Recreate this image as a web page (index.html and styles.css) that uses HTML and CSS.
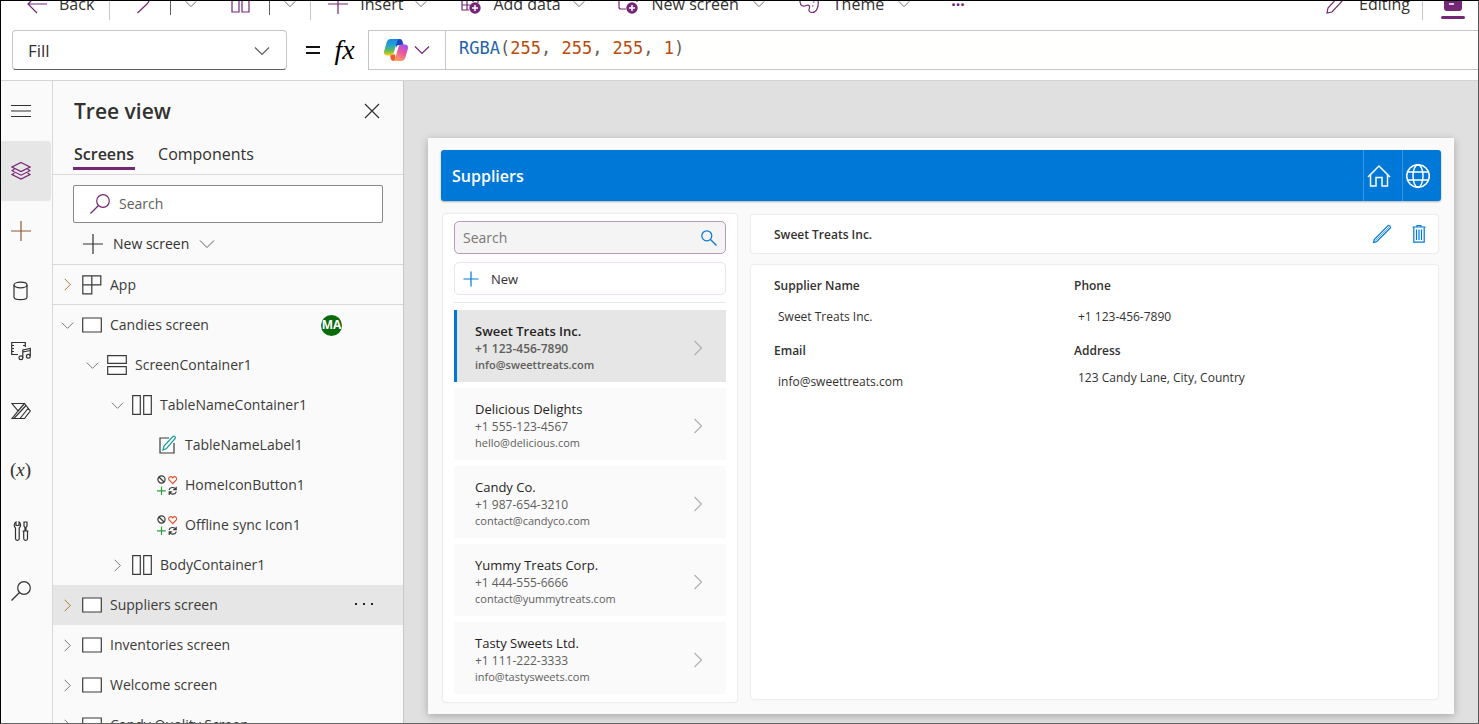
FILE: index.html
```html
<!DOCTYPE html>
<html lang="en">
<head>
<meta charset="utf-8">
<meta name="viewport" content="width=device-width, initial-scale=1">
<title>Suppliers screen - App editor</title>
<link rel="stylesheet" href="styles.css">
</head>
<body>
<svg class="sprite" aria-hidden="true">
  <symbol id="down" viewBox="0 0 16 16"><path d="M1 4.5l7 7 7-7"/></symbol>
  <symbol id="right" viewBox="0 0 16 16"><path d="M4.5 1l7 7-7 7"/></symbol>
  <symbol id="plus" viewBox="0 0 20 20"><path d="M10 0v20M0 10h20"/></symbol>
  <symbol id="search" viewBox="0 0 20 20"><circle cx="13" cy="7" r="6.3"/><path d="M8.5 11.5L.5 19.5"/></symbol>
  <symbol id="screen" viewBox="0 0 20 20"><path class="paper" d="M.7 3h18.6v14H.7z"/></symbol>
  <symbol id="rows" viewBox="0 0 20 20"><path class="paper" d="M.7.7h18.6v7.6H.7zM.7 11.7h18.6v7.6H.7z"/></symbol>
  <symbol id="cols" viewBox="0 0 20 20"><path class="paper" d="M.7.7h7.6v18.6H.7zM11.7.7h7.6v18.6h-7.6z"/></symbol>
  <symbol id="icons" viewBox="0 0 20 20">
    <circle cx="4.5" cy="4.5" r="3.600"/><path d="M2 2l5 5"/>
    <path class="heart" d="M15.700 8.600l-3.600-3.700c-1.500-2 1.400-4.600 3.600-2 2.200-2.600 5.100 0 3.600 2z"/>
    <path class="green" d="M4.500 11.500v8.500M0 15.800h8.800"/>
    <path d="M12.100 15c.8-3 5.200-3.400 6.700-.6M19.200 11.700v3h-3M19.300 16.600c-.8 3-5.200 3.400-6.700.6M12.200 19.900v-3h3"/>
  </symbol>
  <symbol id="badge" viewBox="0 0 12 12"><circle class="solid" cx="6" cy="6" r="5.700"/><path class="cross" d="M6 3v6M3 6h6"/></symbol>
</svg>

<header class="commands">
  <div class="commands-row">
    <button class="cmd back"><svg class="i20" viewBox="0 0 20 20"><path d="M20 10H1M10 1l-9 9 9 9"/></svg>Back</button>
    <span class="rule"></span>
    <button class="cmd undo" aria-label="Undo"><svg class="i20" viewBox="0 0 20 20"><path d="M3 0v5h5M3 5c4-6 14-5 13 1 0 2-1 3-2 4L4.500 19"/></svg></button>
    <span class="rule short"></span>
    <button class="cmd more" aria-label="Undo options"><svg class="chev"><use href="#down"/></svg></button>
    <button class="cmd paste" aria-label="Paste"><svg class="i20" viewBox="0 0 20 20"><path d="M1 2h7v16H1zM11 6h7v12h-7zM5 2h9v4"/></svg></button>
    <span class="rule short"></span>
    <button class="cmd more end" aria-label="Paste options"><svg class="chev"><use href="#down"/></svg></button>
    <span class="rule"></span>
    <button class="cmd insert"><svg class="i20"><use href="#plus"/></svg>Insert<svg class="chev"><use href="#down"/></svg></button>
    <button class="cmd data"><svg class="i20" viewBox="0 0 20 20"><path d="M1 1h16v8M1 1v15h7M1 6h16M1 11h8M6 1v15M12 1v7"/><use href="#badge" x="8" y="8" width="12" height="12"/></svg>Add data<svg class="chev"><use href="#down"/></svg></button>
    <button class="cmd screen"><svg class="i20" viewBox="0 0 20 20"><path d="M1 2h18v6M1 2v11c0 1.500.5 2 2 2h5"/><use href="#badge" x="8" y="8" width="12" height="12"/></svg>New screen<svg class="chev"><use href="#down"/></svg></button>
    <button class="cmd theme"><svg class="i20" viewBox="0 0 20 20"><path d="M1 7C1 3 5 .7 10 .7s9.300 3 9.300 8-2 9.800-6 9.800c-3 0-4-2-3-4 1-3-1-4-3-3-3 1.500-6 .5-6.300-3.700z"/><path d="M14 8h1.500M13 12h1.500M10 5h1.500"/></svg>Theme<svg class="chev"><use href="#down"/></svg></button>
    <button class="cmd dots" aria-label="More commands">···</button>
    <button class="cmd editing"><svg class="i20" viewBox="0 0 20 20"><path d="M1 19l1-5L13 2c2-2 6 1 4 4L6 18z"/></svg>Editing</button>
    <span class="rule"></span>
    <button class="cmd account" aria-label="Copilot pane"><svg class="pane" viewBox="0 0 24 22"><rect class="solid" x="3" y="0" width="18" height="13" rx="3"/><path class="cross" d="M8 6h5"/><rect class="solid" x="0" y="18" width="24" height="3" rx="1.500"/></svg></button>
  </div>
</header>

<section class="formula" aria-label="Formula bar">
  <div class="property">
    <select aria-label="Property"><option>Fill</option></select>
    <svg class="i16"><use href="#down"/></svg>
  </div>
  <svg class="equals" viewBox="0 0 16 16" role="img" aria-label="equals"><path d="M1 5h14M1 11h14"/></svg>
  <span class="fx">fx</span>
  <button class="copilot" aria-label="Copilot">
    <svg class="logo" viewBox="0 0 24 22">
      <defs>
        <linearGradient id="lg1" x1="0" y1="0" x2="0" y2="1"><stop offset="0" stop-color="#1587e8"/><stop offset=".4" stop-color="#2aa6c9"/><stop offset=".7" stop-color="#63bb5a"/><stop offset="1" stop-color="#f5d30c"/></linearGradient>
        <linearGradient id="lg2" x1=".8" y1="0" x2=".3" y2="1"><stop offset="0" stop-color="#a44df0"/><stop offset=".5" stop-color="#ee5a9b"/><stop offset="1" stop-color="#ffa45c"/></linearGradient>
      </defs>
      <path fill="#1448c4" d="M12 0h3.800c1.700 0 2.400 1 2.900 3l.8 3H15c-1.600 0-2.500 1-3 3z"/>
      <path fill="#ef5a35" d="M6 15.500h5l1 6.500H9.500c-1.600 0-2.300-1-2.800-2.800z"/>
      <path fill="url(#lg1)" d="M7 0h8.500c-1.400.4-2 1.400-2.500 3l-3.300 11c-.5 1.800-1.500 2.500-3.200 2.500H3c-2.600 0-3.500-1.800-2.800-4.500L2.600 3.600C3.400 1 4.600 0 7 0z"/>
      <path fill="url(#lg2)" d="M17.500 5.500H21c2.600 0 3.500 1.900 2.800 4.500l-2.400 8.300C20.600 21 19.400 22 17 22H8.800c1.400-.4 2-1.400 2.500-3l3.200-11c.5-1.800 1.300-2.500 3-2.500z"/>
    </svg>
    <svg class="i16 violet"><use href="#down"/></svg>
  </button>
  <div class="code" role="textbox" aria-label="Formula" contenteditable="true" spellcheck="false"><span class="fn">RGBA</span>(<span class="num">255</span>, <span class="num">255</span>, <span class="num">255</span>, <span class="num">1</span>)</div>
</section>

<div class="workspace">
  <nav class="rail" aria-label="Authoring">
    <button aria-label="Menu"><svg class="i20" viewBox="0 0 20 20"><path d="M0 4.500h20M0 10h20M0 15.500h20"/></svg></button>
    <button class="on" aria-label="Tree view"><svg class="i20" viewBox="0 0 20 20"><path d="M10 1.500l9 4.500-9 4.500L1 6z"/><path d="M3.500 8L1 9.700l9 4.500 9-4.500L16.500 8"/><path d="M3.500 12L1 13.500 10 18l9-4.500-2.500-1.500"/></svg></button>
    <button class="plus" aria-label="Insert"><svg class="i20"><use href="#plus"/></svg></button>
    <button aria-label="Data"><svg class="i20" viewBox="0 0 20 20"><ellipse cx="9.500" cy="4" rx="6.500" ry="2.800"/><path d="M3 4v12c0 3.600 13 3.600 13 0V4"/></svg></button>
    <button aria-label="Media"><svg class="i20" viewBox="0 0 20 20"><path d="M7 13.500H.7v-12h13.600V6M1 4.500h2M1 7.500h2M1 10.500h2M12 4.500h2"/><path d="M11.800 16.500V9l7.500-1.500V15M11.800 11l7.500-1.500"/><circle cx="9.900" cy="16.700" r="1.900"/><circle cx="17.300" cy="15.300" r="1.900"/></svg></button>
    <button aria-label="Power Automate"><svg class="i20" viewBox="0 0 20 20"><path d="M1 2.500h12.500l5.800 7.500-5.800 7.500H1L7 10zM7 10l6.500-7.500M1 17.500h2L15 4.500M9 17.500l8-10"/></svg></button>
    <button class="var" aria-label="Variables">(<i>x</i>)</button>
    <button aria-label="Advanced tools"><svg class="i20" viewBox="0 0 20 20"><path d="M5 1v3.500h3V1c2.200 1.500 2 4.500.2 6v10.500c0 2.500-3.700 2.500-3.700 0V7C2.700 5.500 2.800 2.500 5 1zM13 1h3v4l-1 1.500v3h-1v-3L13 5zM11.500 10h6M12.700 10v7.500c0 2.500 3.800 2.500 3.800 0V10"/></svg></button>
    <button aria-label="Search"><svg class="i20"><use href="#search"/></svg></button>
  </nav>

  <aside class="panel">
    <div class="panel-head">
      <h1>Tree view</h1>
      <button aria-label="Close"><svg class="i16" viewBox="0 0 16 16"><path d="M1 1l14 14M15 1L1 15"/></svg></button>
    </div>
    <div class="tabs" role="tablist">
      <button class="on" role="tab" aria-selected="true">Screens</button>
      <button role="tab" aria-selected="false">Components</button>
    </div>
    <label class="find"><svg class="i20 violet"><use href="#search"/></svg><input type="search" placeholder="Search" aria-label="Search tree"></label>
    <button class="new-screen"><svg class="i20"><use href="#plus"/></svg>New screen<svg class="i16 thin"><use href="#down"/></svg></button>
    <ul class="tree">
      <li class="app"><button class="twist tan" aria-label="Expand"><svg><use href="#right"/></svg></button><button class="node"><svg class="i20" viewBox="0 0 20 20"><path d="M.8.800h18v9H.8zM9.800.8v18h-9V9.800"/></svg>App</button></li>
      <li><button class="twist" aria-label="Collapse"><svg><use href="#down"/></svg></button><button class="node"><svg class="i20"><use href="#screen"/></svg>Candies screen</button><span class="avatar">MA</span></li>
      <li class="l1"><button class="twist" aria-label="Collapse"><svg><use href="#down"/></svg></button><button class="node"><svg class="i20"><use href="#rows"/></svg>ScreenContainer1</button></li>
      <li class="l2"><button class="twist" aria-label="Collapse"><svg><use href="#down"/></svg></button><button class="node"><svg class="i20"><use href="#cols"/></svg>TableNameContainer1</button></li>
      <li class="l3"><span class="twist"></span><button class="node"><svg class="i20" viewBox="0 0 20 20"><path d="M12 3H3v15h14V8"/><path class="teal" d="M6 15l1-4 9-9.500c1-1 3 .8 2.200 2L9.500 13.500z"/></svg>TableNameLabel1</button></li>
      <li class="l3"><span class="twist"></span><button class="node"><svg class="i20"><use href="#icons"/></svg>HomeIconButton1</button></li>
      <li class="l3"><span class="twist"></span><button class="node"><svg class="i20"><use href="#icons"/></svg>Offline sync Icon1</button></li>
      <li class="l2"><button class="twist" aria-label="Expand"><svg><use href="#right"/></svg></button><button class="node"><svg class="i20"><use href="#cols"/></svg>BodyContainer1</button></li>
      <li class="on"><button class="twist tan" aria-label="Expand"><svg><use href="#right"/></svg></button><button class="node"><svg class="i20"><use href="#screen"/></svg>Suppliers screen</button><button class="row-more" aria-label="More actions"><svg class="i20" viewBox="0 0 20 20"><path class="dot" d="M0 8h2v2H0zM8 8h2v2H8zM16 8h2v2h-2z"/></svg></button></li>
      <li><button class="twist" aria-label="Expand"><svg><use href="#right"/></svg></button><button class="node"><svg class="i20"><use href="#screen"/></svg>Inventories screen</button></li>
      <li><button class="twist" aria-label="Expand"><svg><use href="#right"/></svg></button><button class="node"><svg class="i20"><use href="#screen"/></svg>Welcome screen</button></li>
      <li><button class="twist" aria-label="Expand"><svg><use href="#right"/></svg></button><button class="node"><svg class="i20"><use href="#screen"/></svg>Candy Quality Screen</button></li>
    </ul>
  </aside>

  <main class="stage">
    <div class="app-screen">
      <header class="app-bar">
        <h2>Suppliers</h2>
        <button aria-label="Home"><svg class="i24" viewBox="0 0 24 24"><path d="M1 13L12 2l11 11M3.500 11v11H9v-8.500h6V22h5.500V11"/></svg></button>
        <button aria-label="Offline sync"><svg class="i24" viewBox="0 0 24 24"><circle cx="12" cy="12" r="11.300"/><ellipse cx="12" cy="12" rx="5" ry="11.300"/><path d="M2 8h20M2 16h20"/></svg></button>
      </header>
      <div class="app-body">
        <section class="list card">
          <label class="list-find"><input type="search" placeholder="Search" aria-label="Search suppliers"><svg class="i16 blue" viewBox="0 0 16 16"><circle cx="5.800" cy="5.800" r="5"/><path d="M9.500 9.500l6 6"/></svg></label>
          <button class="new"><svg class="i16 blue" viewBox="0 0 16 16"><path d="M8 .5v15M.5 8h15"/></svg>New</button>
          <ul class="suppliers">
            <li class="on"><button><span class="who"><b>Sweet Treats Inc.</b><span>+1 123-456-7890</span><span class="mail">info@sweettreats.com</span></span><svg class="i16"><use href="#right"/></svg></button></li>
            <li><button><span class="who"><b>Delicious Delights</b><span>+1 555-123-4567</span><span class="mail">hello@delicious.com</span></span><svg class="i16"><use href="#right"/></svg></button></li>
            <li><button><span class="who"><b>Candy Co.</b><span>+1 987-654-3210</span><span class="mail">contact@candyco.com</span></span><svg class="i16"><use href="#right"/></svg></button></li>
            <li><button><span class="who"><b>Yummy Treats Corp.</b><span>+1 444-555-6666</span><span class="mail">contact@yummytreats.com</span></span><svg class="i16"><use href="#right"/></svg></button></li>
            <li><button><span class="who"><b>Tasty Sweets Ltd.</b><span>+1 111-222-3333</span><span class="mail">info@tastysweets.com</span></span><svg class="i16"><use href="#right"/></svg></button></li>
          </ul>
        </section>
        <section class="detail">
          <div class="detail-head card">
            <h3>Sweet Treats Inc.</h3>
            <button aria-label="Edit"><svg class="i20 blue" viewBox="0 0 20 20"><path d="M1.500 18.500l.8-3L16 1.700c1-1 3.300 1.200 2.300 2.300L4.500 17.700z"/><path class="hair" d="M3.500 16.500L17 3"/></svg></button>
            <button aria-label="Delete"><svg class="i20 blue" viewBox="0 0 20 20"><path d="M3.500 3h13M8 2.500V1.500h4v1M4.800 3v15.200h10.400V3M7.500 5.500v10.500M10 5.500v10.500M12.500 5.500v10.500"/></svg></button>
          </div>
          <dl class="fields card">
            <div><dt>Supplier Name</dt><dd>Sweet Treats Inc.</dd></div>
            <div><dt>Phone</dt><dd>+1 123-456-7890</dd></div>
            <div><dt>Email</dt><dd>info@sweettreats.com</dd></div>
            <div class="multi"><dt>Address</dt><dd>123 Candy Lane, City, Country</dd></div>
          </dl>
        </section>
      </div>
    </div>
  </main>
</div>
</body>
</html>
```

FILE: styles.css
```css
* { box-sizing: border-box; }
body {
  margin: 0;
  height: 100vh;
  display: flex;
  flex-direction: column;
  overflow: hidden;
  border: 1px solid #000;
  border-right-color: #555;
  border-bottom-color: #666;
  background: #fff;
  color: #323130;
  font: 14px/20px "Open Sans", "Noto Sans", sans-serif;
}
h1, h2, h3, ul, dl, dd { margin: 0; padding: 0; }
ul { list-style: none; }
button, input, select { font: inherit; color: inherit; border: 0; background: none; padding: 0; margin: 0; }
input, select { outline: none; }
button { display: flex; align-items: center; cursor: pointer; text-align: left; white-space: nowrap; }
svg { fill: none; stroke: currentColor; stroke-width: 1.2; flex: none; display: block; }
.sprite { position: absolute; width: 0; height: 0; }
.i16 { width: 16px; height: 16px; }
.i20 { width: 20px; height: 20px; }
.i24 { width: 24px; height: 24px; stroke-width: 1.5; }
.violet { color: #742774; }
.blue { color: #0078d7; }
.thin { stroke-width: 1; color: #605e5c; }
.hair { stroke-width: 1; opacity: .6; }
.solid { fill: #742774; stroke: none; }
.cross { stroke: #fff; stroke-width: 1.5; }
.paper { fill: #fff; }
.heart { stroke: #e8532b; }
.green { stroke: #2f9e3f; }
.teal { stroke: #159c98; fill: #fff; }
.dot { fill: #222; stroke: none; }

.commands { flex: none; height: 29px; display: flex; align-items: flex-end; overflow: hidden; }
.commands-row { flex: 1; height: 52px; display: flex; align-items: center; font-size: 16px; }
.cmd { height: 40px; gap: 12px; }
.cmd svg { color: #742774; }
.cmd .chev { width: 12px; height: 12px; color: #605e5c; }
.rule { width: 1px; height: 32px; background: #c8c6c4; }
.rule.short { height: 22px; background: #605e5c; }
.back { padding: 0 15px 0 26px; }
.undo { padding: 0 17px 0 23px; }
.more { padding: 0 34px 0 14px; }
.more.end { padding-right: 14px; }
.paste { padding-right: 18px; }
.insert { padding: 0 34px 0 17px; }
.data { padding-right: 33px; }
.screen { padding-right: 34px; }
.theme { padding-right: 41px; }
.screen, .theme { gap: 14px; }
.dots { color: #742774; font-weight: 700; }
.editing { margin-left: auto; padding-right: 12px; gap: 13px; }
.account { padding: 0 13px 0 18px; }
.pane { width: 24px; height: 22px; margin-top: 10px; }

.formula { flex: none; display: flex; align-items: center; height: 50px; padding-bottom: 10px; }
.property { position: relative; width: 275px; height: 40px; margin-left: 11px; }
.property select { width: 100%; height: 100%; padding: 2px 15px 0; appearance: none; border: 1px solid #c8c6c4; border-bottom-color: #605e5c; border-radius: 4px; font-size: 17px; }
.property svg { position: absolute; right: 17px; top: 13px; pointer-events: none; color: #605e5c; }
.equals { width: 16px; height: 16px; margin-left: 18px; stroke: #111; stroke-width: 2; }
.fx { width: 47px; text-align: center; font: italic 28px/40px "Liberation Serif", serif; color: #000; }
.copilot { width: 78px; height: 40px; gap: 6px; padding: 0 15px; border: 1px solid #c8c6c4; }
.logo { width: 24px; height: 22px; stroke: none; }
.code { flex: 1; height: 40px; padding-left: 13px; border: solid #c8c6c4; border-width: 1px 0; outline: none; background: #fffffd; color: #605e5c; font: 17px/34px "DejaVu Sans Mono", monospace; white-space: pre; }
.fn { color: #2464a8; }
.num { color: #b84a0c; }

.workspace { flex: 1; min-height: 0; display: flex; border-top: 1px solid #d4d4d4; background: #fafafa; }
.rail { flex: none; width: 52px; padding-right: 1px; border-right: 1px solid #d8d8d8; overflow: hidden; }
.rail button { width: 50px; height: 60px; padding-left: 10px; border-radius: 0 4px 4px 0; }
.rail .on { background: #e6e6e6; color: #742774; }
.rail .plus { color: #8a5a3a; }
.rail .var { padding: 0 0 3px 9px; font: 19px/56px "Liberation Serif", serif; }

.panel { flex: none; width: 351px; border-right: 1px solid #c8c8c8; overflow: hidden; }
.panel-head { display: flex; justify-content: space-between; align-items: center; height: 60px; padding: 0 23px 0 21px; }
h1 { font-size: 21px; line-height: 30px; font-weight: 600; }
.tabs { display: flex; gap: 22px; height: 34px; padding-left: 20px; border-bottom: 1px solid #d8d8d8; font-size: 16px; }
.tabs button { height: 29px; padding: 0 1px; border-bottom: 3px solid transparent; }
.tabs .on { font-weight: 600; border-color: #742774; }
.find { display: flex; align-items: center; gap: 9px; height: 38px; margin: 10px 20px 0; padding-left: 16px; border: 1px solid #8a8886; border-radius: 2px; background: #fff; }
.find input { flex: 1; min-width: 0; }
input::placeholder { color: #605e5c; opacity: 1; }
.new-screen { height: 42px; width: 100%; gap: 10px; padding-left: 30px; border-bottom: 1px solid #d8d8d8; }
.tree li { display: flex; align-items: center; height: 40px; padding-left: 8px; color: #3b3a39; }
.tree .app { border-bottom: 1px solid #d8d8d8; }
.tree .on { background: #e6e6e6; }
.tree .l1 { padding-left: 33px; }
.tree .l2 { padding-left: 58px; }
.tree .l3 { padding-left: 83px; }
.twist { width: 12px; margin-right: 9px; color: #797775; }
.twist svg { width: 13px; height: 13px; }
.tan { color: #a87830; }
.node { gap: 8px; }
.avatar { width: 21px; height: 21px; margin: 0 61px 0 auto; border-radius: 50%; overflow: hidden; display: flex; justify-content: center; background: #0b6a0b; color: #fff; font-size: 12px; font-weight: 700; }
.row-more { margin: 0 28px 0 auto; }

.stage { flex: 1; min-width: 0; display: flex; padding: 57px 24px 9px; background: #e0e0e0; }
.app-screen { flex: 1; min-width: 0; display: flex; flex-direction: column; padding: 12px 13px; background: #fafafa; box-shadow: 0 2px 8px rgba(0,0,0,.25); }
.app-bar { flex: none; display: flex; height: 51px; padding-left: 11px; border-radius: 3px; background: #0078d7; color: #fff; box-shadow: 0 1px 2px rgba(0,0,0,.3); }
h2 { margin-right: auto; font-size: 16px; line-height: 52px; font-weight: 600; }
.app-bar button { width: 39px; padding-left: 3px; border-left: 1px solid #3b96de; }
.app-body { flex: 1; min-height: 0; display: flex; gap: 14px; padding: 13px 3px 0 2px; }
.card { background: #fff; border-radius: 3px; box-shadow: 0 0 2px rgba(0,0,0,.2); }
.list { flex: none; width: 294px; display: flex; flex-direction: column; padding: 7px 11px 6px; }
.list-find { display: flex; align-items: center; flex: none; height: 33px; padding: 0 8px; border: 1px solid #b99ab9; border-radius: 5px; background: #f4f4f4; }
.list-find input { flex: 1; min-width: 0; }
.list-find input::placeholder { color: #797775; }
.new { flex: none; height: 33px; margin: 8px 0 7px; padding-left: 8px; gap: 12px; border: 1px solid #ece2ee; border-radius: 5px; font-size: 13px; }
.suppliers { flex: 1; min-height: 0; overflow: hidden; display: flex; flex-direction: column; gap: 6px; padding-top: 7px; border-top: 1px solid #e8e8e8; }
.suppliers button { width: 100%; height: 72px; padding: 0 20px 0 18px; border-left: 3px solid #fafafa; background: #fafafa; justify-content: space-between; }
.suppliers .on button { background: #e6e6e6; border-left-color: #0078d7; }
.suppliers svg { height: 20px; padding-top: 4px; color: #b0b0b0; }
.who { display: flex; flex-direction: column; padding-top: 2px; font-size: 12px; line-height: 16px; color: #605e5c; }
.who b { font-size: 13px; line-height: 20px; font-weight: 400; color: #252423; }
.who .mail { font-size: 11px; }
.on .who, .on .who b { font-weight: 600; }
.detail { flex: 1; min-width: 0; display: flex; flex-direction: column; gap: 12px; padding: 1px 0 3px; }
.detail-head { flex: none; display: flex; height: 38px; padding: 0 9px 0 23px; gap: 17px; }
h3 { margin-right: auto; font-size: 12px; line-height: 40px; font-weight: 600; }
.fields { flex: 1; display: grid; grid-template-columns: repeat(auto-fill, 300px); align-content: start; padding: 11px 23px; font-size: 12px; }
.fields div { height: 65px; }
dt { font-weight: 600; line-height: 20px; }
dd { padding: 0 4px; line-height: 42px; }
.multi dd { line-height: 34px; }
```
